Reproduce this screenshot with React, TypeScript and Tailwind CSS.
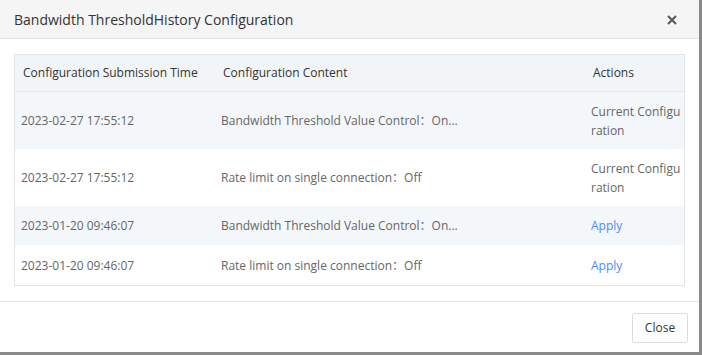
import React from "react";

const rows = [
  { time: "2023-02-27 17:55:12", content: "Bandwidth Threshold Value Control：On...", action: "current" },
  { time: "2023-02-27 17:55:12", content: "Rate limit on single connection：Off", action: "current" },
  { time: "2023-01-20 09:46:07", content: "Bandwidth Threshold Value Control：On...", action: "apply" },
  { time: "2023-01-20 09:46:07", content: "Rate limit on single connection：Off", action: "apply" },
];

export default function App() {
  return (
    <div
      className="w-[702px] h-[355px] bg-[#8a8a8a] overflow-hidden"
      style={{ fontFamily: '"Open Sans", "Noto Sans CJK SC", sans-serif' }}
    >
      <div className="w-[699px] h-[352px] bg-white flex flex-col">
        <div className="h-[39px] bg-[#f5f5f5] border-b border-[#e3e3e3] flex items-center justify-between pl-[14px] pr-[22px] shrink-0">
          <span className="text-[14px] text-[#333]">Bandwidth ThresholdHistory Configuration</span>
          <svg width="10" height="10" viewBox="0 0 10 10" className="mt-[1px]">
            <path d="M1 1 L9 9 M9 1 L1 9" stroke="#555" strokeWidth="2" />
          </svg>
        </div>
        <div className="px-[14px] pt-[15px] pb-[15px] border-b border-[#e5e5e5]">
          <div className="border border-[#dfe4ea]">
            <div className="flex bg-[#f2f5f8] border-b border-[#e3e8ee] h-[37px] items-center text-[12px] text-[#333]">
              <div className="w-[200px] shrink-0 pl-[8px]">Configuration Submission Time</div>
              <div className="w-[370px] shrink-0 pl-[8px]">Configuration Content</div>
              <div className="flex-1 pl-[8px]">Actions</div>
            </div>
            {rows.map((r, i) => (
              <div
                key={i}
                className={`flex items-center text-[12px] text-[#666] leading-[19px] ${i % 2 === 0 ? "bg-[#f4f7fa]" : "bg-white"} ${r.action === "current" ? "h-[57px]" : i === 2 ? "h-[39px]" : "h-[40px]"}`}
              >
                <div className="w-[200px] shrink-0 pl-[6px]">{r.time}</div>
                <div className="w-[370px] shrink-0 pl-[6px]">{r.content}</div>
                <div className="flex-1 pl-[6px] pr-[1px] break-all">
                  {r.action === "current" ? (
                    <span>Current Configuration</span>
                  ) : (
                    <span className="text-[#4a8cf7]">Apply</span>
                  )}
                </div>
              </div>
            ))}
          </div>
        </div>
        <div className="flex justify-end pr-[11px] pt-[11px]">
          <button className="w-[56px] h-[30px] border border-[#dcdcdc] rounded-[2px] bg-white text-[12px] text-[#333]">
            Close
          </button>
        </div>
      </div>
    </div>
  );
}
